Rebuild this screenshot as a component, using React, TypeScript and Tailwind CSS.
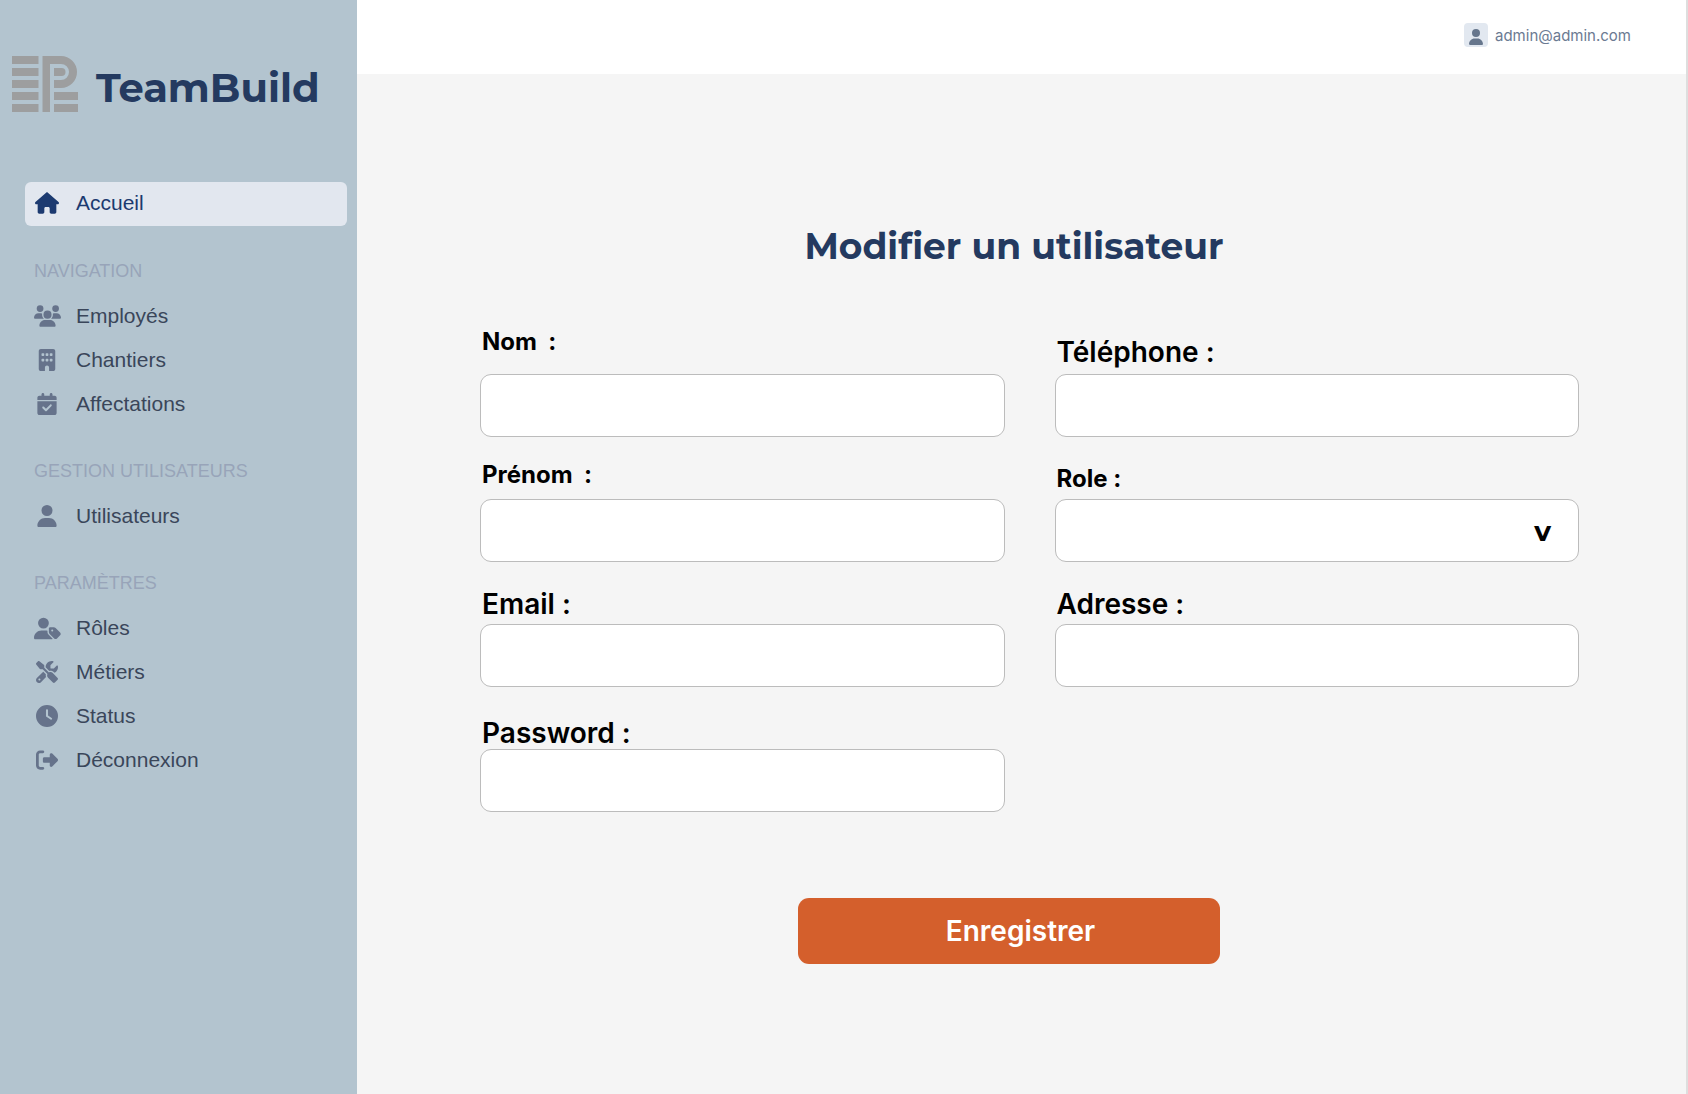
import type { ReactNode } from "react";
import type { IconType } from "react-icons";
import {
  FaHouse,
  FaBuilding,
  FaCalendarCheck,
  FaUser,
  FaUserTag,
  FaScrewdriverWrench,
  FaClock,
  FaRightFromBracket,
} from "react-icons/fa6";

function Logo() {
  return (
    <svg width="66" height="56" viewBox="0 0 66 56" fill="#9d9e9f" aria-hidden="true">
      <path d="M0 0h26.500v8H0zM0 12h26.500v8H0zM0 24h26.500v8H0zM0 36h26.500v8H0zM0 48h26.500v8H0z" />
      <path d="M30.500 0H49a16 16 0 0 1 0 32H42V24H49a8 8 0 0 0 0-16H38V56H30.500z" />
      <path d="M42 12h7.500a4 4 0 0 1 0 8H42z" />
      <path d="M42 36h24v8H42zM42 48h24v8H42z" />
    </svg>
  );
}

/* Three busts, the middle one in front */
function TeamIcon() {
  return (
    <svg width="27" height="22" viewBox="0 0 640 512" fill="currentColor" aria-hidden="true">
      <path d="M144 0a80 80 0 1 1 0 160A80 80 0 1 1 144 0zM512 0a80 80 0 1 1 0 160A80 80 0 1 1 512 0zM0 298.700C0 239.800 47.800 192 106.700 192h42.700c15.900 0 31 3.500 44.600 9.700c-1.300 7.200-1.900 14.700-1.900 22.300c0 38.200 16.800 72.500 43.300 96H21.300C9.600 320 0 310.400 0 298.700zM405.300 320h-.7c26.600-23.500 43.300-57.800 43.300-96c0-7.600-.7-15-1.900-22.300c13.600-6.300 28.700-9.700 44.600-9.700h42.700C592.200 192 640 239.800 640 298.700c0 11.800-9.600 21.300-21.300 21.300H405.300zM224 224a96 96 0 1 1 192 0 96 96 0 1 1-192 0zM128 485.300C128 411.700 187.700 352 261.300 352H378.700C452.300 352 512 411.700 512 485.300c0 14.700-11.900 26.700-26.700 26.700H154.700c-14.700 0-26.700-11.900-26.700-26.700z" />
    </svg>
  );
}

function NavItem({ icon, label, active = false }: { icon: ReactNode; label: string; active?: boolean }) {
  return (
    <a
      href="#"
      className={
        active
          ? "flex h-11 items-center gap-[15px] rounded-md bg-[#e2e7ef] pb-0.5 pl-2 text-[21px] text-[#1c3a70]"
          : "flex h-11 items-center gap-[15px] rounded-md pl-2 text-[21px] text-[#3a465a]"
      }
    >
      <span className={active ? "flex w-7 justify-center" : "flex w-7 justify-center text-[#66738b]"}>{icon}</span>
      {label}
    </a>
  );
}

function NavGroup({ title, children }: { title: string; children: ReactNode }) {
  return (
    <section className="mt-[23px]">
      <h2 className="flex h-[45px] items-center pb-0.5 pl-[9px] text-lg text-[#98a4b9]">{title}</h2>
      {children}
    </section>
  );
}

const glyph = (Icon: IconType) => <Icon size={22} />;

type FieldProps = { id: string; label: string; labelClass: string; type?: string };

const box = "h-[63px] w-full rounded-[11px] border border-[#bcbcbc] bg-white px-4 text-xl";

function Field({ id, label, labelClass, type = "text" }: FieldProps) {
  return (
    <div className="flex flex-col">
      <label htmlFor={id} className={labelClass}>
        {label}
      </label>
      {type === "select" ? (
        <div className="relative">
          <select id={id} className={`${box} appearance-none`} />
          <span className="pointer-events-none absolute inset-y-0 right-7 flex items-center font-['Montserrat','Inter',sans-serif] text-[28px] font-bold">
            v
          </span>
        </div>
      ) : (
        <input id={id} type={type} className={box} />
      )}
    </div>
  );
}

const small = "whitespace-pre pl-0.5 text-2xl leading-7 font-bold";
const large = "whitespace-pre pl-0.5 text-[28px] leading-8 font-semibold";

export default function App() {
  return (
    <div className="flex min-h-screen bg-[#f5f5f5] font-['Inter',sans-serif] text-black">
      <aside className="w-[357px] shrink-0 bg-[#b3c4cf] font-['Liberation_Sans',sans-serif]">
        <div className="flex h-[182px] items-start gap-[18px] pt-14 pl-3">
          <Logo />
          <span className="font-['Montserrat','Inter',sans-serif] text-[40px] leading-[64px] font-bold text-[#243a60]">
            TeamBuild
          </span>
        </div>
        <nav className="pr-2.5 pl-[25px]">
          <NavItem active icon={<FaHouse size={24} />} label="Accueil" />
          <NavGroup title="NAVIGATION">
            <NavItem icon={<TeamIcon />} label="Employés" />
            <NavItem icon={glyph(FaBuilding)} label="Chantiers" />
            <NavItem icon={glyph(FaCalendarCheck)} label="Affectations" />
          </NavGroup>
          <NavGroup title="GESTION UTILISATEURS">
            <NavItem icon={glyph(FaUser)} label="Utilisateurs" />
          </NavGroup>
          <NavGroup title="PARAMÈTRES">
            <NavItem icon={<FaUserTag size={27} />} label="Rôles" />
            <NavItem icon={glyph(FaScrewdriverWrench)} label="Métiers" />
            <NavItem icon={glyph(FaClock)} label="Status" />
            <NavItem icon={glyph(FaRightFromBracket)} label="Déconnexion" />
          </NavGroup>
        </nav>
      </aside>

      <div className="flex min-w-0 flex-1 flex-col border-r-2 border-[#dedede]">
        <header className="flex h-[74px] items-start justify-end gap-[7px] bg-white pt-[23px] pr-[55px]">
          <span className="flex size-6 items-end justify-center rounded bg-[#e2e8f0] pb-0.5 text-[#66768c]">
            <FaUser size={16} />
          </span>
          <span className="text-[15px] leading-[26px] text-[#6b7a92]">admin@admin.com</span>
        </header>

        <main className="flex-1">
          <h1 className="mt-[142px] pr-[15px] text-center font-['Montserrat','Inter',sans-serif] text-4xl leading-[60px] font-bold text-[#243a60]">
            Modifier un utilisateur
          </h1>
          <form>
            <div className="mt-9 grid auto-rows-[125px] grid-cols-2 items-end gap-x-[50px] pr-[107px] pl-[123px]">
              <Field id="nom" label="Nom  :" labelClass={`${small} pb-[18px]`} />
              <Field id="telephone" label="Téléphone :" labelClass={`${large} pb-1.5`} type="tel" />
              <Field id="prenom" label="Prénom  :" labelClass={`${small} pb-2.5`} />
              <Field id="role" label="Role :" labelClass={`${small} pb-1.5`} type="select" />
              <Field id="email" label="Email :" labelClass={`${large} pb-1`} type="email" />
              <Field id="adresse" label="Adresse :" labelClass={`${large} pb-1`} />
              <Field id="password" label="Password :" labelClass={large} type="password" />
            </div>
            <div className="mt-[86px] flex justify-center pr-[26px]">
              <button
                type="submit"
                className="h-[66px] w-[422px] rounded-[11px] bg-[#d45f2c] pl-6 text-[28px] font-semibold text-white"
              >
                Enregistrer
              </button>
            </div>
          </form>
        </main>
      </div>
    </div>
  );
}
